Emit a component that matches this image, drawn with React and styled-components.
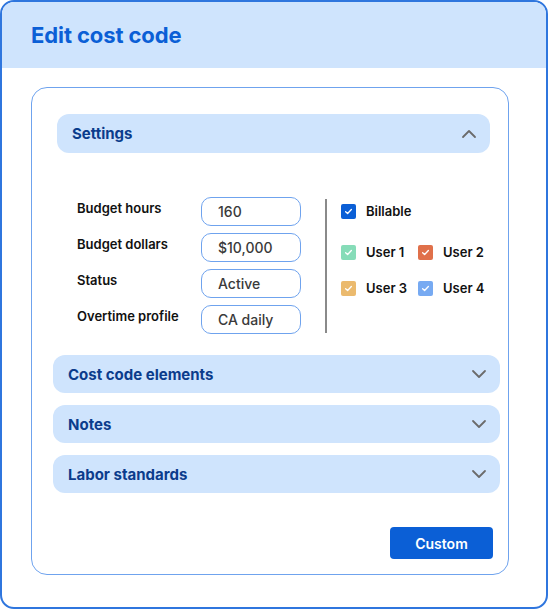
import React from 'react'
import styled, { createGlobalStyle } from 'styled-components'

const GlobalStyle = createGlobalStyle`
    * { box-sizing: border-box; }
    body {
        margin: 0;
        font-family: Inter, "Noto Sans", sans-serif;
        background: #ffffff;
    }
`

const Frame = styled.div`
    width: 548px;
    height: 609px;
    border: 2px solid #2f76de;
    border-radius: 14px;
    overflow: hidden;
    background: #ffffff;
`

const Header = styled.div`
    height: 66px;
    background: #cfe4fd;
    display: flex;
    align-items: center;
    padding-left: 29px;
`

const Title = styled.h1`
    margin: 0;
    font-size: 22px;
    font-weight: 700;
    color: #0b5fd6;
    letter-spacing: -0.1px;
`

const Body = styled.div`
    padding: 19px 37px 0 29px;
`

const Panel = styled.div`
    height: 488px;
    border: 1px solid #6fa3ee;
    border-radius: 16px;
    padding: 26px 8px 0 21px;
    display: flex;
    flex-direction: column;
`

const Section = styled.div`
    margin: ${p => p.$open ? '0 10px 0 4px' : '0'};
`

const SectionHead = styled.div`
    height: ${p => p.$open ? '39px' : '38px'};
    background: #cfe4fd;
    border-radius: 12px;
    display: flex;
    align-items: center;
    justify-content: space-between;
    padding: 0 12px 0 15px;
    font-size: 15px;
    font-weight: 700;
    color: #0b3c8c;
`

const Chevron = ({ up }) => (
    <svg width="18" height="18" viewBox="0 0 18 18" fill="none">
        <polyline
            points={up ? '3,12 9,6 15,12' : '3,6 9,12 15,6'}
            stroke="#6b6b6b"
            strokeWidth="1.8"
            strokeLinecap="round"
            strokeLinejoin="round"
        />
    </svg>
)

const SettingsBody = styled.div`
    display: flex;
    padding: 44px 0 21px 20px;
`

const Fields = styled.div`
    display: flex;
    flex-direction: column;
    gap: 7px;
    padding-right: 24px;
`

const FieldRow = styled.div`
    display: flex;
    align-items: flex-start;
`

const Label = styled.div`
    width: 124px;
    padding-top: 2px;
    font-size: 13px;
    line-height: 18px;
    font-weight: 600;
    color: #111111;
`

const Input = styled.div`
    width: 100px;
    height: 29px;
    border: 1px solid #6fa3ee;
    border-radius: 10px;
    padding-left: 16px;
    display: flex;
    align-items: center;
    font-size: 14px;
    font-weight: 500;
    color: #3a3a3a;
`

const Divider = styled.div`
    width: 2px;
    margin-top: 2px;
    height: 134px;
    background: #8a8a8a;
`

const Checks = styled.div`
    padding: 7px 0 0 14px;
    display: flex;
    flex-direction: column;
    gap: 26px;
`

const UserGrid = styled.div`
    display: grid;
    grid-template-columns: 77px auto;
    row-gap: 21px;
`

const CheckItem = styled.div`
    display: flex;
    align-items: center;
    gap: 10px;
    font-size: 13px;
    font-weight: 600;
    color: #111111;
    line-height: 15px;
`

const Box = styled.span`
    width: 15px;
    height: 15px;
    border-radius: 2px;
    background: ${p => p.$color};
    display: flex;
    align-items: center;
    justify-content: center;
`

const Check = ({ color, children }) => (
    <CheckItem>
        <Box $color={color}>
            <svg width="9" height="9" viewBox="0 0 10 10" fill="none">
                <polyline points="1.8,5.2 4,7.2 8.2,2.8" stroke="#ffffff" strokeWidth="1.5" strokeLinecap="round" strokeLinejoin="round" />
            </svg>
        </Box>
        {children}
    </CheckItem>
)

const Collapsed = styled.div`
    display: flex;
    flex-direction: column;
    gap: 12px;
`

const Footer = styled.div`
    display: flex;
    justify-content: flex-end;
    padding: 34px 7px 0 0;
`

const Button = styled.button`
    width: 103px;
    height: 32px;
    border: none;
    border-radius: 4px;
    background: #0b5fd6;
    color: #ffffff;
    font-family: inherit;
    font-size: 14px;
    font-weight: 600;
`

const fields = [
    { label: 'Budget hours', value: '160' },
    { label: 'Budget dollars', value: '$10,000' },
    { label: 'Status', value: 'Active' },
    { label: 'Overtime profile', value: 'CA daily' },
]

const users = [
    { name: 'User 1', color: '#86dcb8' },
    { name: 'User 2', color: '#e0704a' },
    { name: 'User 3', color: '#ebba6e' },
    { name: 'User 4', color: '#77aaf2' },
]

const sections = ['Cost code elements', 'Notes', 'Labor standards']

const App = () => {
    return (
        <>
            <GlobalStyle />
            <Frame>
                <Header>
                    <Title>Edit cost code</Title>
                </Header>
                <Body>
                    <Panel>
                        <Section $open>
                            <SectionHead $open>
                                Settings
                                <Chevron up />
                            </SectionHead>
                            <SettingsBody>
                                <Fields>
                                    {fields.map(f => (
                                        <FieldRow key={f.label}>
                                            <Label>{f.label}</Label>
                                            <Input>{f.value}</Input>
                                        </FieldRow>
                                    ))}
                                </Fields>
                                <Divider />
                                <Checks>
                                    <Check color="#0b5fd6">Billable</Check>
                                    <UserGrid>
                                        {users.map(u => <Check key={u.name} color={u.color}>{u.name}</Check>)}
                                    </UserGrid>
                                </Checks>
                            </SettingsBody>
                        </Section>
                        <Collapsed>
                            {sections.map(s => (
                                <SectionHead key={s}>
                                    {s}
                                    <Chevron />
                                </SectionHead>
                            ))}
                        </Collapsed>
                        <Footer>
                            <Button>Custom</Button>
                        </Footer>
                    </Panel>
                </Body>
            </Frame>
        </>
    )
}

export default App
